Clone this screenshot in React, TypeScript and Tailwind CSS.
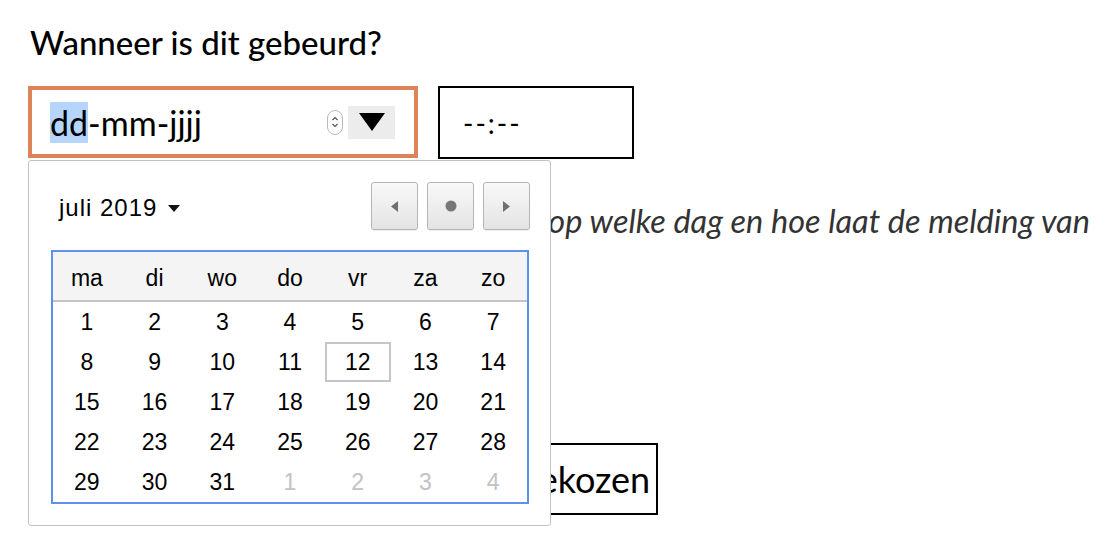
const gill = "font-['Lato','Open_Sans',sans-serif]";
const sys = "font-['Liberation_Sans','Arial',sans-serif]";

const weekdays = ['ma', 'di', 'wo', 'do', 'vr', 'za', 'zo'];

// juli 2019 begint op maandag; laatste rij loopt door in augustus
const weeks: { day: number; muted?: boolean }[][] = [];
for (let w = 0; w < 5; w++) {
  const row = [];
  for (let d = 0; d < 7; d++) {
    const n = w * 7 + d + 1;
    row.push(n > 31 ? { day: n - 31, muted: true } : { day: n });
  }
  weeks.push(row);
}

function NavButton({ children }: { children: React.ReactNode }) {
  return (
    <button
      type="button"
      className="flex h-[48px] w-[47px] items-center justify-center rounded-[3px] border border-[#b5b5b5] bg-gradient-to-b from-[#f8f8f8] to-[#e4e4e4] shadow-[0_1px_1px_rgba(0,0,0,0.08)]"
    >
      {children}
    </button>
  );
}

function DatePopup() {
  return (
    <div className={`absolute left-0 top-full z-10 mt-[2px] h-[366px] w-[523px] rounded-[3px] border border-[#c2c2c2] bg-white ${sys}`}>
      <div className="flex items-start justify-between pl-[30px] pr-[20px] pt-[21px]">
        <div className="mt-[11px] flex items-center gap-[11px] text-[24px] leading-[30px] tracking-[1px] text-black">
          <span>juli 2019</span>
          <svg width="12" height="7" viewBox="0 0 12 7" aria-hidden="true">
            <path d="M0 0h12L6 7z" fill="#111" />
          </svg>
        </div>
        <div className="flex gap-[9px]">
          <NavButton>
            <svg width="7" height="11" viewBox="0 0 7 11" aria-hidden="true">
              <path d="M7 0v11L0 5.5z" fill="#6f6f6f" />
            </svg>
          </NavButton>
          <NavButton>
            <svg width="12" height="12" viewBox="0 0 12 12" aria-hidden="true">
              <circle cx="6" cy="6" r="5.5" fill="#777" />
            </svg>
          </NavButton>
          <NavButton>
            <svg width="7" height="11" viewBox="0 0 7 11" aria-hidden="true">
              <path d="M0 0v11l7-5.5z" fill="#6f6f6f" />
            </svg>
          </NavButton>
        </div>
      </div>
      <div className="ml-[22px] mt-[20px] w-[478px] border-2 border-[#5e92ea]">
        <div className="grid h-[50px] grid-cols-7 border-b-2 border-[#c4c4c4] bg-[#f4f4f4] text-[23px] text-black">
          {weekdays.map((d) => (
            <div key={d} className="flex items-center justify-center pt-[4px]">{d}</div>
          ))}
        </div>
        {weeks.map((row, i) => (
          <div key={i} className="grid h-[40px] grid-cols-7 text-[23px]">
            {row.map((c) => (
              <div key={`${i}-${c.day}`} className="flex items-center justify-center">
                {c.day === 12 && !c.muted ? (
                  <span className="flex h-[40px] w-[66px] items-center justify-center border-2 border-[#c6c6c6] text-black">12</span>
                ) : (
                  <span className={c.muted ? 'text-[#c2c2c2]' : 'text-black'}>{c.day}</span>
                )}
              </div>
            ))}
          </div>
        ))}
      </div>
    </div>
  );
}

export default function App() {
  return (
    <div className={`relative h-[540px] w-[1112px] overflow-hidden bg-white pl-[28px] ${gill}`}>
      <h2 className="pl-[2px] pt-[21px] text-[33px] font-medium leading-[42px] text-black">Wanneer is dit gebeurd?</h2>

      <div className="mt-[23px] flex items-start gap-[20px]">
        <div className="relative">
          {/* datumveld met focusrand */}
          <div className="flex h-[72px] w-[390px] items-center border-4 border-[#dc835a] pl-[18px] pr-[19px]">
            <div className="flex-1 text-[34px] leading-[41px] text-black">
              <span className="bg-[#b5d5fd]">dd</span>-mm-jjjj
            </div>
            <div className="flex h-[25px] w-[16px] flex-col items-center justify-center rounded-full border border-[#bbb]">
              <svg width="8" height="16" viewBox="0 0 8 16" aria-hidden="true">
                <path d="M1.5 6 4 3.5 6.5 6M1.5 10 4 12.5 6.5 10" fill="none" stroke="#555" strokeWidth="1.2" />
              </svg>
            </div>
            <div className="ml-[5px] flex h-[33px] w-[47px] items-center justify-center bg-[#ececec]">
              <svg width="26" height="18" viewBox="0 0 26 18" aria-hidden="true">
                <path d="M0 0h26L13 18z" fill="#000" />
              </svg>
            </div>
          </div>
          <DatePopup />
        </div>

        <div className="flex h-[73px] w-[196px] items-center border-2 border-black pl-[23px] text-[28px] tracking-[2px] text-black">
          --:--
        </div>
      </div>

      <p className="mt-[42px] w-[1078px] pl-[2px] text-[32.5px] italic leading-[40px] text-[#333]">
        Vul hieronder zo goed als mogelijk aan op welke dag en hoe laat de melding van het incident plaatsvond.
      </p>

      <button
        type="button"
        className="mt-[162px] flex h-[72px] w-[630px] items-center justify-end border-2 border-black pr-[6px] text-[36px] text-black"
      >
        Geen datum gekozen
      </button>
    </div>
  );
}
